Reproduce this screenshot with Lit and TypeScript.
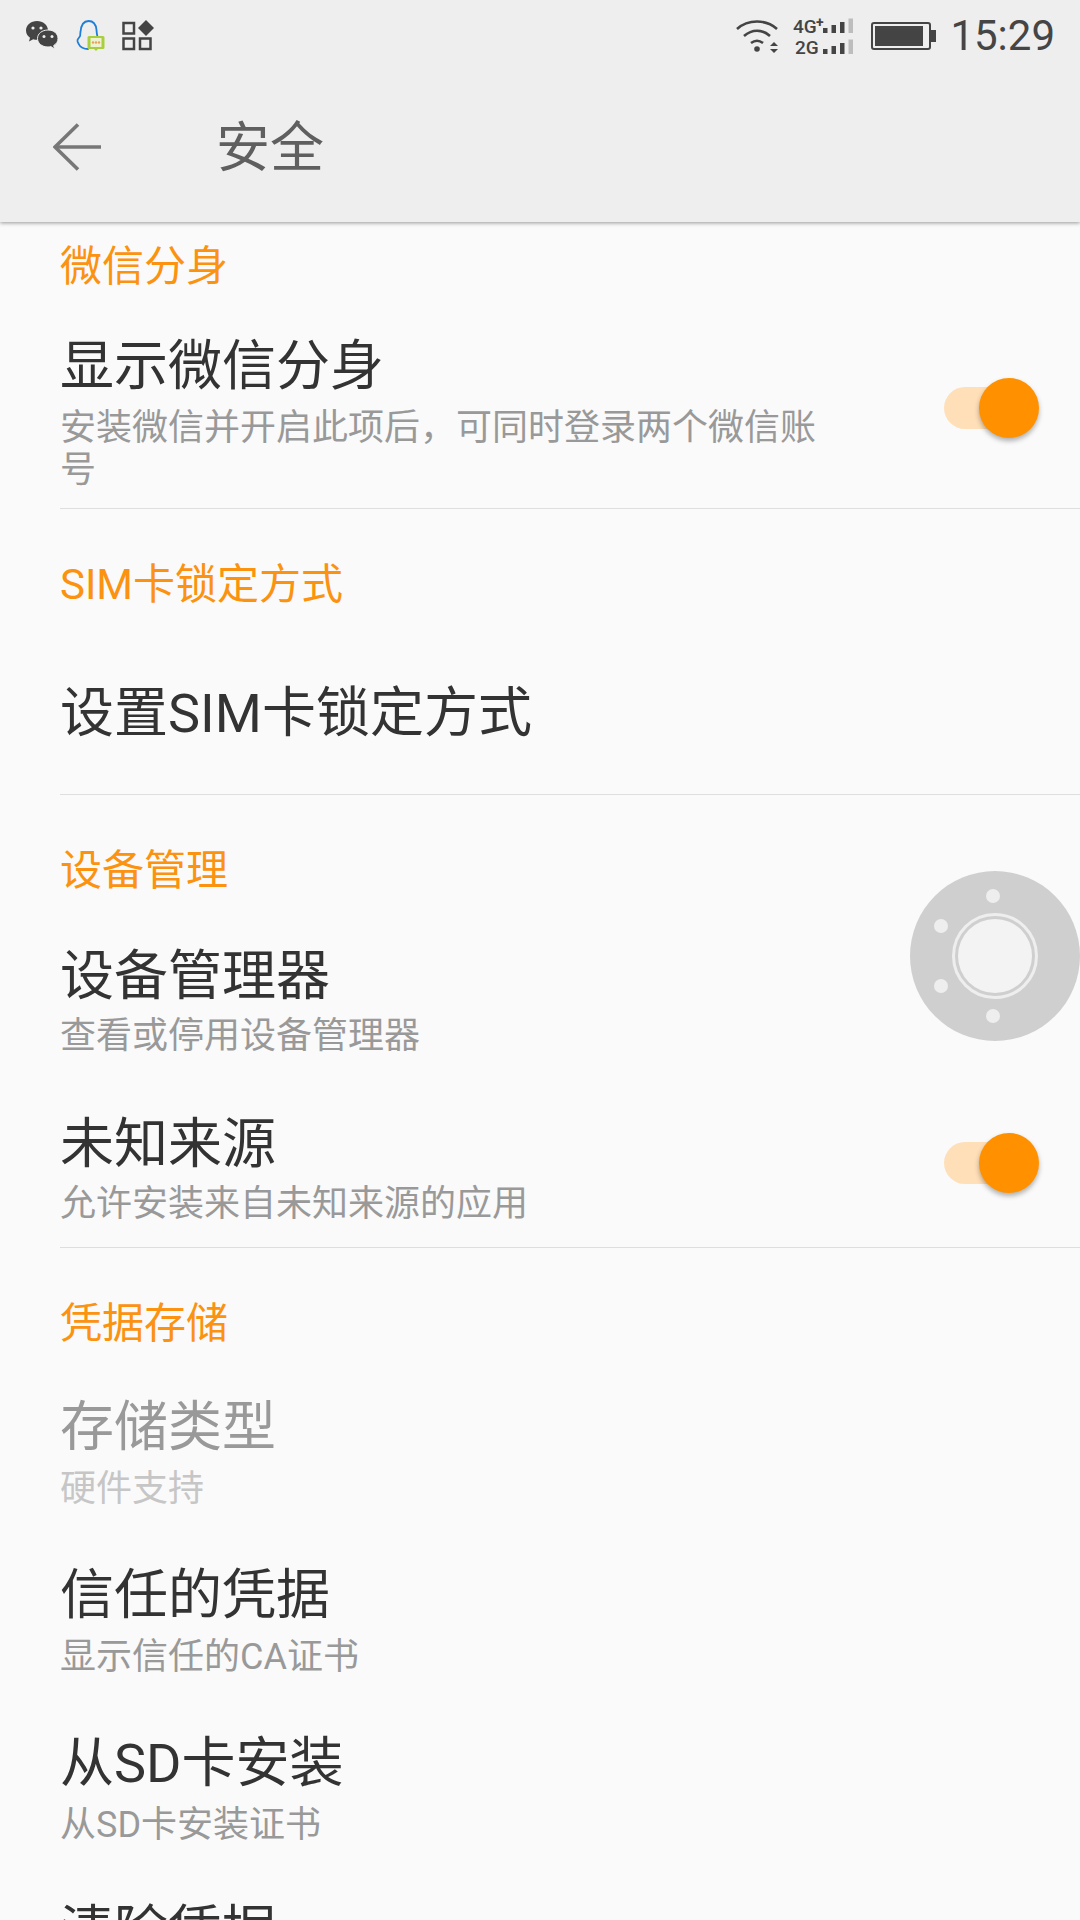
import { LitElement, css, html, svg } from "lit";
import { customElement } from "lit/decorators.js";

type Row = { title: string; sub?: string; on?: boolean; disabled?: boolean };
type Section = { label: string; rows: Row[]; kind?: string };

const sections: Section[] = [
  {
    label: "微信分身",
    kind: "first",
    rows: [
      { title: "显示微信分身", sub: "安装微信并开启此项后，可同时登录两个微信账号", on: true },
    ],
  },
  { label: "SIM卡锁定方式", rows: [{ title: "设置SIM卡锁定方式" }] },
  {
    label: "设备管理",
    kind: "tight",
    rows: [
      { title: "设备管理器", sub: "查看或停用设备管理器" },
      { title: "未知来源", sub: "允许安装来自未知来源的应用", on: true },
    ],
  },
  {
    label: "凭据存储",
    kind: "last",
    rows: [
      { title: "存储类型", sub: "硬件支持", disabled: true },
      { title: "信任的凭据", sub: "显示信任的CA证书" },
      { title: "从SD卡安装", sub: "从SD卡安装证书" },
      { title: "清除凭据", sub: "删除所有证书" },
    ],
  },
];

const bars = (y: number) =>
  [
    [30, 5, "#444"],
    [38.5, 8, "#444"],
    [47, 11, "#444"],
    [55.5, 14.5, "#bdbdbd"],
  ].map(
    ([x, h, c]) =>
      svg`<rect x=${x} y=${y - (h as number)} width="4.5" height=${h} fill=${c}></rect>`,
  );

@customElement("app-root")
export class AppRoot extends LitElement {
  static styles = css`
    :host {
      display: block;
      position: relative;
      width: 1080px;
      height: 1920px;
      overflow: hidden;
      background: #fafafa;
      font-family: Roboto, "Noto Sans CJK SC", sans-serif;
    }

    .top {
      position: relative;
      z-index: 1;
      background: #eeeeee;
      box-shadow: 0 1px 4px rgba(0, 0, 0, 0.4);
    }

    .status {
      display: flex;
      align-items: center;
      height: 72px;
      padding: 0 25px 0 26px;
    }

    .status-left {
      display: flex;
      align-items: center;
      gap: 17px;
      flex: 1;
    }

    .status-right {
      display: flex;
      align-items: center;
    }

    .status svg {
      display: block;
    }

    .signal {
      margin-left: 12px;
    }

    .battery {
      margin-left: 16px;
    }

    .time {
      margin-left: 14px;
      font-size: 42px;
      line-height: 72px;
      color: #454545;
    }

    .bar {
      display: flex;
      align-items: center;
      height: 150px;
      padding-left: 53px;
    }

    .back {
      display: block;
      margin-right: 115px;
    }

    .bar-title {
      padding-top: 4px;
      font-size: 54px;
      line-height: 72px;
      color: #5f5f5f;
    }

    .section {
      margin-left: 60px;
      border-bottom: 1px solid #dedede;
    }

    .section.last {
      border-bottom: none;
    }

    .label {
      padding: 46px 0 12px;
      font-size: 42px;
      line-height: 60px;
      color: #fb9210;
    }

    .section.first .label {
      padding: 15px 0 10px;
    }

    .section.tight .label {
      padding-bottom: 10px;
    }

    .section.last .label {
      padding-bottom: 9px;
    }

    .row {
      display: flex;
      align-items: center;
      min-height: 167px;
      box-sizing: border-box;
      padding: 24px 41px 17px 0;
    }

    .section.tight .row,
    .section.last .row {
      min-height: 168px;
    }

    .text {
      flex: 1;
      margin-right: 120px;
    }

    .title {
      font-size: 54px;
      line-height: 72px;
      color: #333333;
    }

    .sub {
      margin-top: 4px;
      font-size: 36px;
      line-height: 42px;
      color: #999999;
    }

    .section.tight .sub {
      margin-top: 2px;
    }

    .row.disabled .title {
      color: #999999;
    }

    .row.disabled .sub {
      color: #c6c6c6;
    }

    .toggle {
      position: relative;
      flex: none;
      width: 95px;
      height: 60px;
      margin-bottom: 7px;
    }

    .track {
      position: absolute;
      left: 0;
      top: 9px;
      width: 80px;
      height: 42px;
      border-radius: 21px;
      background: #ffdfb8;
    }

    .knob {
      position: absolute;
      right: 0;
      top: 0;
      width: 60px;
      height: 60px;
      border-radius: 50%;
      background: #ff9100;
      box-shadow: 0 3px 5px rgba(0, 0, 0, 0.3);
    }

    .float {
      position: absolute;
      left: 910px;
      top: 871px;
      display: block;
    }
  `;

  renderRow(r: Row) {
    return html`<div class="row ${r.disabled ? "disabled" : ""}">
      <div class="text">
        <div class="title">${r.title}</div>
        ${r.sub ? html`<div class="sub">${r.sub}</div>` : ""}
      </div>
      ${r.on
        ? html`<div class="toggle">
            <div class="track"></div>
            <div class="knob"></div>
          </div>`
        : ""}
    </div>`;
  }

  render() {
    return html`<div class="top">
        <div class="status">
          <div class="status-left">
            <svg width="33" height="30" viewBox="0 0 33 30">
              <path d="M11 0C5 0 0 4 0 9.4c0 3 1.600 5.600 4 7.300L3 20.500l4.200-2.300c1.200.4 2.500.6 3.800.6C17 18.800 22 14.800 22 9.400 22 4 17 0 11 0z" fill="#444"></path>
              <circle cx="7" cy="7" r="1.600" fill="#eee"></circle>
              <circle cx="15" cy="7" r="1.600" fill="#eee"></circle>
              <path d="M22 9c-6 0-10.500 3.700-10.500 8.500S16 26 22 26c1 0 2-.1 2.900-.4l3.600 2.400-.8-3.500c2.800-1.600 4.300-4 4.300-7C32 12.700 28 9 22 9z" fill="#444" stroke="#eee" stroke-width="1"></path>
              <circle cx="18" cy="15.500" r="1.500" fill="#eee"></circle>
              <circle cx="26" cy="15.500" r="1.500" fill="#eee"></circle>
            </svg>
            <svg width="29" height="32" viewBox="0 0 29 32">
              <path d="M12 29c-4 0-8-2-9-4.500-1-1.500-2-3-1.500-4.500.5-1.500 2-2.500 2.500-4 .5-1 0-2 .5-4C5 6 7 1 12.500 1c5 0 7.500 4 8 9 .1 1.500.3 4 .8 6" fill="none" stroke="#1f7fd8" stroke-width="1.800" stroke-linecap="round"></path>
              <path d="M13 16h14a1.500 1.500 0 0 1 1.500 1.500v10a1.500 1.500 0 0 1-1.500 1.500h-5l-2 2-2-2h-5a1.500 1.500 0 0 1-1.500-1.500v-10A1.500 1.500 0 0 1 13 16z" fill="#a9cf3e"></path>
              <rect x="14.500" y="18" width="11" height="9" fill="#eef3cf"></rect>
              <circle cx="17" cy="22.500" r="1.200" fill="#e8a35c"></circle>
              <circle cx="20" cy="22.500" r="1.200" fill="#e8a35c"></circle>
              <circle cx="23" cy="22.500" r="1.200" fill="#e8a35c"></circle>
            </svg>
            <svg width="33" height="32" viewBox="0 0 33 32" fill="none" stroke="#444" stroke-width="2.500">
              <rect x="1.500" y="3" width="10.500" height="10.500"></rect>
              <rect x="1.500" y="18.500" width="10.500" height="10.500"></rect>
              <rect x="18" y="18.500" width="10.500" height="10.500"></rect>
              <path d="M24 0l8 8-8 8-8-8z" fill="#444" stroke="none"></path>
            </svg>
          </div>
          <div class="status-right">
            <svg width="46" height="36" viewBox="0 0 46 36" fill="none" stroke="#444" stroke-width="2.600">
              <path d="M2 11C13 1 31 1 42 11"></path>
              <path d="M9 18C17 11 27 11 35 18"></path>
              <path d="M16 25c4-3 8-3 12 0"></path>
              <circle cx="22" cy="31" r="2.800" fill="#444" stroke="none"></circle>
              <path d="M39 24l4 4h-8zM39 35l4-4h-8z" fill="#444" stroke="none"></path>
            </svg>
            <svg class="signal" width="62" height="48" viewBox="0 0 62 48">
              <text x="0" y="21" font-family="Roboto" font-size="19" font-weight="500" fill="#444">4G</text>
              <text x="23" y="15" font-family="Roboto" font-size="14" font-weight="700" fill="#444">+</text>
              <text x="2" y="42" font-family="Roboto" font-size="19" font-weight="500" fill="#444">2G</text>
              ${bars(21)} ${bars(42)}
            </svg>
            <svg class="battery" width="65" height="28" viewBox="0 0 65 28">
              <rect x="1" y="1" width="58" height="26" rx="2" fill="none" stroke="#444" stroke-width="2"></rect>
              <rect x="4" y="4" width="48" height="20" fill="#444"></rect>
              <rect x="60" y="8" width="5" height="12" fill="#444"></rect>
            </svg>
            <div class="time">15:29</div>
          </div>
        </div>
        <div class="bar">
          <svg class="back" width="48" height="48" viewBox="0 0 48 48" fill="none" stroke="#777" stroke-width="3.600">
            <path d="M48 24H2"></path>
            <path d="M25 1.500L2 24l23 22.500"></path>
          </svg>
          <div class="bar-title">安全</div>
        </div>
      </div>
      ${sections.map(
        (s) => html`<div class="section ${s.kind ?? ""}">
          <div class="label">${s.label}</div>
          ${s.rows.map((r) => this.renderRow(r))}
        </div>`,
      )}
      <svg class="float" width="170" height="170" viewBox="0 0 170 170">
        <circle cx="85" cy="85" r="85" fill="#cfcfcf"></circle>
        <circle cx="85" cy="85" r="41.500" fill="none" stroke="#eeeeee" stroke-width="3"></circle>
        <circle cx="85" cy="85" r="37" fill="#f3f3f3"></circle>
        <circle cx="83" cy="25" r="7" fill="#eeeeee"></circle>
        <circle cx="31" cy="55" r="7" fill="#eeeeee"></circle>
        <circle cx="31" cy="115" r="7" fill="#eeeeee"></circle>
        <circle cx="83" cy="145" r="7" fill="#eeeeee"></circle>
      </svg>`;
  }
}
